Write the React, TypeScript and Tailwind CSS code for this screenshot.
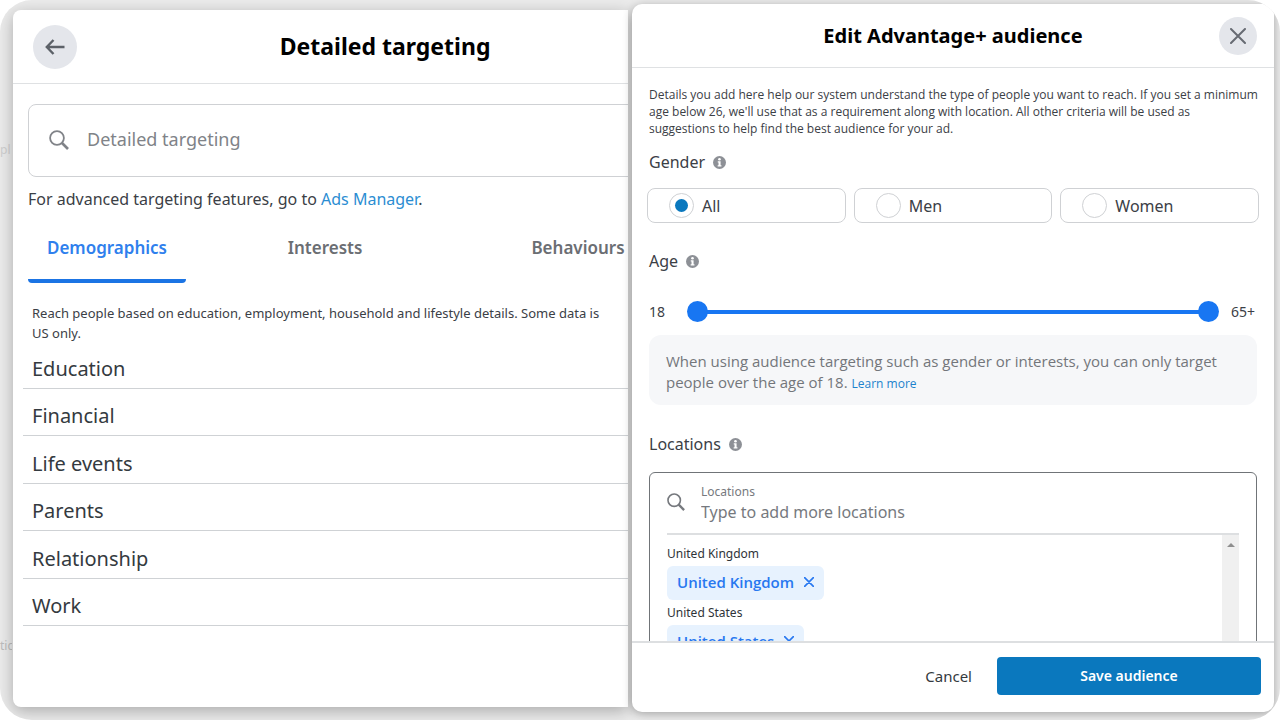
import { useState } from 'react';
import type { ReactNode } from 'react';

const tabs = ['Demographics', 'Interests', 'Behaviours'];
const categories = ['Education', 'Financial', 'Life events', 'Parents', 'Relationship', 'Work'];
const genders = ['All', 'Men', 'Women'];

function SearchIcon({ className }: { className: string }) {
  return (
    <svg viewBox="0 0 20 20" fill="none" stroke="currentColor" className={className} aria-hidden="true">
      <circle cx="8" cy="8" r="6.9" strokeWidth="1.8" />
      <path d="M13 13 L19 19" strokeWidth="2.6" />
    </svg>
  );
}

function InfoIcon() {
  return (
    <svg viewBox="0 0 12 12" className="size-[13px]" aria-hidden="true">
      <circle cx="6" cy="6" r="6" fill="#8d9096" />
      <circle cx="6" cy="3" r="1.2" fill="#fff" />
      <path d="M4.4 4.9 H7 V8.5 H7.8 V9.7 H4.3 V8.5 H5.1 V6.1 H4.4 Z" fill="#fff" />
    </svg>
  );
}

function CrossIcon({ className, strokeWidth }: { className: string; strokeWidth: number }) {
  return (
    <svg viewBox="0 0 16 16" fill="none" stroke="currentColor" strokeWidth={strokeWidth} className={className} aria-hidden="true">
      <path d="M1 1 L15 15 M15 1 L1 15" strokeLinecap="round" />
    </svg>
  );
}

function SectionLabel({ children }: { children: ReactNode }) {
  return (
    <h3 className="flex items-center gap-2 text-[16px] leading-5 text-[#3b4046]">
      {children}
      <InfoIcon />
    </h3>
  );
}

function LocationChip({ name }: { name: string }) {
  return (
    <div>
      <p className="text-[12px] leading-4 text-[#2f3338]">{name}</p>
      <button
        type="button"
        aria-label={`Remove ${name}`}
        className="mt-1 flex h-[34px] items-center gap-2.5 rounded-md bg-[#e7f2fe] px-2.5 pb-0.5 font-['Open_Sans','Noto_Sans',sans-serif] text-[15px] font-semibold text-[#2878f0]"
      >
        {name}
        <CrossIcon className="size-[10px]" strokeWidth={2.6} />
      </button>
    </div>
  );
}

function TargetingPanel() {
  const [activeTab, setActiveTab] = useState('Demographics');

  return (
    <section className="relative mt-2.5 mb-[13px] min-w-0 flex-1 overflow-hidden rounded-l-lg bg-white shadow-[0_4px_16px_rgba(0,0,0,0.28)]">
      {/* wider than the panel, the right side runs under the audience dialog */}
      <div className="w-[121%]">
        <header className="grid h-[74px] grid-cols-[1fr_auto_1fr] items-center border-b border-[#dfe1e3] px-5">
          <button type="button" aria-label="Back" className="flex size-11 items-center justify-center rounded-full bg-[#e4e6eb] text-[#5c6168]">
            <svg viewBox="0 0 20 16" fill="none" stroke="currentColor" strokeWidth="2.4" className="h-4 w-5" aria-hidden="true">
              <path d="M8.5 1 L1.8 8 L8.5 15 M2 8 H19.5" />
            </svg>
          </button>
          <h1 className="pb-0.5 text-[23px] leading-8 font-bold text-black">Detailed targeting</h1>
        </header>

        <div className="px-[15px] pt-5">
          <label className="flex h-[73px] items-center gap-[18px] rounded-lg border border-[#cfd1d4] px-5 pb-0.5 text-[#808388]">
            <SearchIcon className="size-5" />
            <input
              type="text"
              aria-label="Detailed targeting"
              placeholder="Detailed targeting"
              className="min-w-0 flex-1 text-[18px] outline-none placeholder:text-[#808388]"
            />
          </label>
          <p className="mt-2.5 text-[16px] leading-6 text-[#3b4046]">
            For advanced targeting features, go to <a href="#" className="text-[#2b8dd2]">Ads Manager</a>.
          </p>

          <div role="tablist" className="mt-2.5 flex">
            {tabs.map(tab => (
              <button
                key={tab}
                type="button"
                role="tab"
                aria-selected={activeTab === tab}
                onClick={() => setActiveTab(tab)}
                className={
                  activeTab === tab
                    ? 'mr-[60px] h-[62px] w-[158px] shrink-0 rounded-sm border-b-4 border-[#1b74e4] pb-1 text-[17px] font-semibold text-[#2f80ed]'
                    : 'mr-[95px] h-[62px] w-[158px] shrink-0 border-b-4 border-transparent pb-1 text-[17px] font-semibold text-[#6b6e73]'
                }
              >
                {tab}
              </button>
            ))}
          </div>
        </div>

        <p className="mt-5 px-[19px] text-[13px] leading-5 text-[#3b4046]">
          Reach people based on education, employment, household and lifestyle details. Some data is
          <br />
          US only.
        </p>
        <ul className="-mt-0.5 mr-2.5 ml-2.5 grid h-[285px] grid-rows-6">
          {categories.map(category => (
            <li key={category} className="flex border-b border-[#cfd2d5]">
              <button type="button" className="flex flex-1 items-end px-[9px] pb-[7px] text-[20px] leading-6 text-[#343a40]">
                {category}
              </button>
            </li>
          ))}
        </ul>
      </div>
    </section>
  );
}

function AgeSlider() {
  const [age, setAge] = useState([18, 65]);
  const thumb =
    'pointer-events-none absolute inset-0 m-0 w-full appearance-none bg-transparent [&::-webkit-slider-thumb]:pointer-events-auto [&::-webkit-slider-thumb]:size-[21px] [&::-webkit-slider-thumb]:appearance-none [&::-webkit-slider-thumb]:rounded-full [&::-webkit-slider-thumb]:bg-[#1876f2]';

  return (
    <div className="mt-[30px] flex items-center text-[14px] leading-5 text-[#3b4046]">
      <span className="w-[38px]">{age[0]}</span>
      <div className="relative flex h-[21px] flex-1 items-center">
        <div className="mx-2 h-1 flex-1 bg-[#1876f2]" />
        <input
          type="range"
          aria-label="Minimum age"
          min={18}
          max={65}
          value={age[0]}
          onChange={e => setAge([Math.min(Number(e.target.value), age[1]), age[1]])}
          className={thumb}
        />
        <input
          type="range"
          aria-label="Maximum age"
          min={18}
          max={65}
          value={age[1]}
          onChange={e => setAge([age[0], Math.max(Number(e.target.value), age[0])])}
          className={thumb}
        />
      </div>
      <span className="w-[38px] pl-3">{age[1] === 65 ? '65+' : age[1]}</span>
    </div>
  );
}

function AudiencePanel() {
  const [gender, setGender] = useState('All');

  return (
    <section className="z-10 mt-1 mb-2 ml-1 flex w-[642px] shrink-0 flex-col overflow-hidden rounded-[10px] bg-white shadow-[0_2px_10px_rgba(0,0,0,0.3)]">
      <header className="grid h-16 shrink-0 grid-cols-[1fr_auto_1fr] items-center border-b border-[#dfe1e3] px-[17px]">
        <h2 className="col-start-2 text-[20px] leading-8 font-bold text-black">Edit Advantage+ audience</h2>
        <button type="button" aria-label="Close" className="flex size-[38px] items-center justify-center justify-self-end rounded-full bg-[#e4e6eb] text-[#676b73]">
          <CrossIcon className="size-4" strokeWidth={2} />
        </button>
      </header>

      <div className="min-h-0 flex-1 overflow-hidden px-[17px] pt-[18px]">
        <p className="-mr-1 font-['Open_Sans','Noto_Sans',sans-serif] text-[12px] leading-[17px] text-[#3b4046]">
          Details you add here help our system understand the type of people you want to reach. If you set a minimum age below 26, we'll use that as a requirement along with location. All other criteria will be used as
          <br />
          suggestions to help find the best audience for your ad.
        </p>

        <div className="mt-[15px]">
          <SectionLabel>Gender</SectionLabel>
        </div>
        <div className="-mx-0.5 mt-4 grid grid-cols-3 gap-2">
          {genders.map(option => (
            <label key={option} className="flex h-[35px] items-center gap-2 rounded-lg border border-[#cfd1d4] px-[21px] text-[16px] text-[#3b4046]">
              <input
                type="radio"
                name="gender"
                checked={gender === option}
                onChange={() => setGender(option)}
                className="flex size-[25px] appearance-none items-center justify-center rounded-full border border-[#cfd1d4] before:size-[13px] before:rounded-full checked:before:bg-[#0a78be]"
              />
              {option}
            </label>
          ))}
        </div>

        <div className="mt-7">
          <SectionLabel>Age</SectionLabel>
        </div>
        <AgeSlider />
        <p className="mt-[13px] rounded-xl bg-[#f6f7f9] px-[17px] pt-4 pb-[11px] font-['Open_Sans','Noto_Sans',sans-serif] text-[15px] leading-[21px] text-[#73767b]">
          When using audience targeting such as gender or interests, you can only target people over the age of 18.{' '}
          <a href="#" className="text-[12px] text-[#1c82cc]">Learn more</a>
        </p>

        <div className="mt-[29px]">
          <SectionLabel>Locations</SectionLabel>
        </div>
        <div className="mt-[18px] rounded-md border border-[#707478] px-[17px]">
          <div className="flex gap-4 border-b-2 border-[#dddfe1] pt-2.5 pb-2 text-[#76797e]">
            <SearchIcon className="mt-2.5 size-[18px]" />
            <div className="flex flex-1 flex-col">
              <label htmlFor="locations" className="text-[12px] leading-[18px]">Locations</label>
              <input
                id="locations"
                type="text"
                placeholder="Type to add more locations"
                className="h-6 pb-0.5 text-[16px] outline-none placeholder:text-[#76797e]"
              />
            </div>
          </div>
          <div className="flex h-[180px] overflow-hidden">
            <div className="flex flex-1 flex-col items-start gap-[5px] pt-[11px]">
              <LocationChip name="United Kingdom" />
              <LocationChip name="United States" />
            </div>
            <div className="flex w-[17px] justify-center bg-[#f0f0f0] pt-2">
              <svg viewBox="0 0 8 4" fill="#8f8f8f" className="h-1 w-2" aria-hidden="true">
                <path d="M0 4 L4 0 L8 4 Z" />
              </svg>
            </div>
          </div>
        </div>
      </div>

      <footer className="flex h-[71px] shrink-0 items-center justify-end gap-[25px] border-t-2 border-[#dddfe1] px-[13px] pb-1">
        <button type="button" className="text-[15px] leading-5 text-[#343a40]">Cancel</button>
        <button type="button" className="h-[38px] w-[264px] rounded bg-[#0a78be] text-[14px] leading-5 font-semibold text-white">
          Save audience
        </button>
      </footer>
    </section>
  );
}

export default function App() {
  return (
    <div className="h-screen bg-white font-['Noto_Sans','Open_Sans',sans-serif]">
      <main className="relative flex h-full overflow-hidden rounded-[32px] bg-[#ebebeb] pr-1.5 pl-[13px]">
        {/* dimmed page behind the dialogs */}
        <span className="absolute top-[141px] left-0 w-3 overflow-hidden text-[12px] text-[#cfcfcf]">pl</span>
        <span className="absolute top-[637px] left-0 w-3 overflow-hidden text-[12px] text-[#bdbdbd]">tic</span>
        <TargetingPanel />
        <AudiencePanel />
      </main>
    </div>
  );
}
